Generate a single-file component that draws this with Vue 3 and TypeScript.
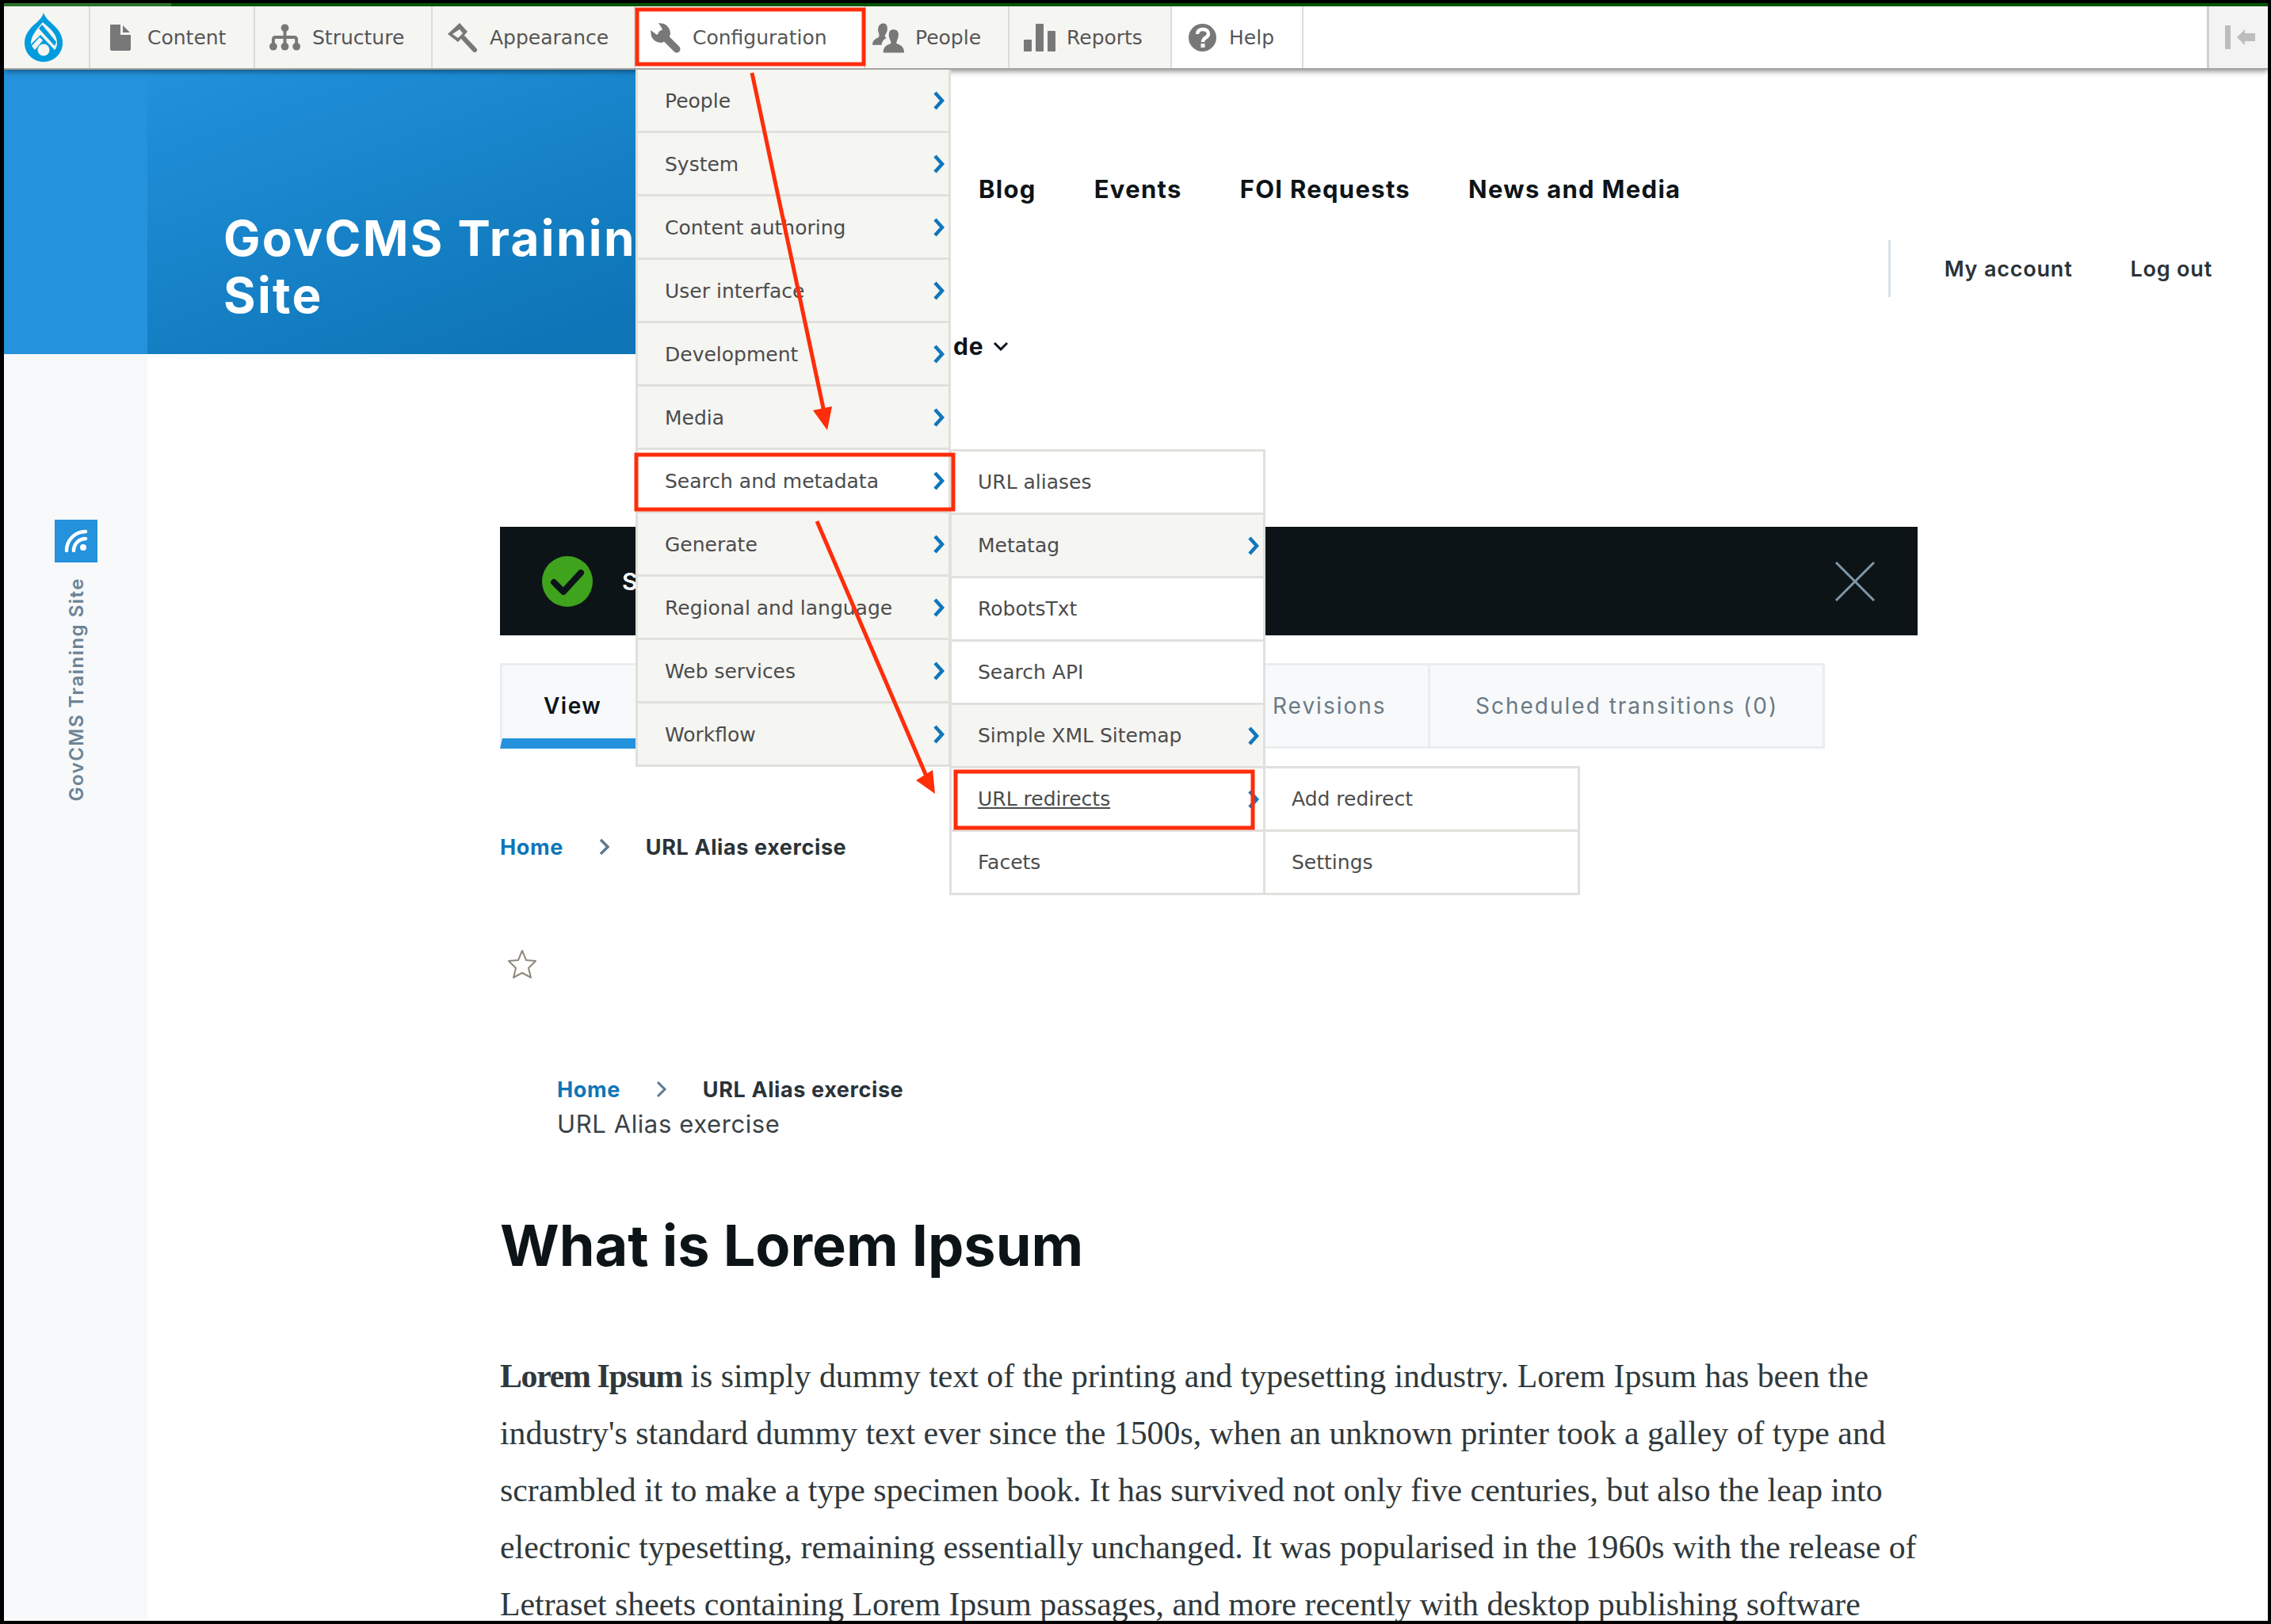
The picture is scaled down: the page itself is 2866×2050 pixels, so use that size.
<script setup lang="ts">
interface TopItem { label: string; icon: string; w: number; cls?: string }
interface MenuRow { label: string; arrow?: boolean; white?: boolean; under?: boolean }

const topItems: TopItem[] = [
  { label: 'Content', icon: 'content', w: 208 },
  { label: 'Structure', icon: 'structure', w: 224 },
  { label: 'Appearance', icon: 'appearance', w: 256 },
  { label: 'Configuration', icon: 'config', w: 290, cls: 'active' },
  { label: 'People', icon: 'people', w: 182, cls: 'tight' },
  { label: 'Reports', icon: 'reports', w: 205 },
  { label: 'Help', icon: 'help', w: 166, cls: 'active' },
]

const level1: MenuRow[] = [
  { label: 'People', arrow: true },
  { label: 'System', arrow: true },
  { label: 'Content authoring', arrow: true },
  { label: 'User interface', arrow: true },
  { label: 'Development', arrow: true },
  { label: 'Media', arrow: true },
  { label: 'Search and metadata', arrow: true, white: true },
  { label: 'Generate', arrow: true },
  { label: 'Regional and language', arrow: true },
  { label: 'Web services', arrow: true },
  { label: 'Workflow', arrow: true },
]
const level2: MenuRow[] = [
  { label: 'URL aliases', white: true },
  { label: 'Metatag', arrow: true },
  { label: 'RobotsTxt', white: true },
  { label: 'Search API', white: true },
  { label: 'Simple XML Sitemap', arrow: true },
  { label: 'URL redirects', arrow: true, white: true, under: true },
  { label: 'Facets', white: true },
]
const level3: MenuRow[] = [
  { label: 'Add redirect', white: true },
  { label: 'Settings', white: true },
]
const menus = [
  { cls: 'm1', rows: level1 },
  { cls: 'm2', rows: level2 },
  { cls: 'm3', rows: level3 },
]

const bodyLines = [
  ' is simply dummy text of the printing and typesetting industry. Lorem Ipsum has been the',
  "industry's standard dummy text ever since the 1500s, when an unknown printer took a galley of type and",
  'scrambled it to make a type specimen book. It has survived not only five centuries, but also the leap into',
  'electronic typesetting, remaining essentially unchanged. It was popularised in the 1960s with the release of',
  'Letraset sheets containing Lorem Ipsum passages, and more recently with desktop publishing software',
]
</script>

<template>
  <div class="frame">
    <div class="screen">
      <div class="progress"><div class="progress-done"></div></div>

      <div class="toolbar">
        <div class="logo-cell">
          <svg width="48" height="62" viewBox="0 0 48 62">
            <path fill="#009cde" d="M24 0C26 7 32 11 38 17C44 23 48 29 48 38C48 52 37 62 24 62C11 62 0 52 0 38C0 29 5 22 11 16C17 11 22 7 24 0Z" />
            <path fill="#f5f5f2" d="M23 12C29 18 41 25 41 38C41 42 40 45 38 47L20 28L8 40C7 30 17 19 23 12Z" />
            <path fill="#009cde" d="M22 15L40 37L38 42L18 20Z" />
            <path fill="#f5f5f2" d="M9 42L19 31L23 35L13 47Z" />
            <circle cx="24" cy="47" r="7.5" fill="#f5f5f2" />
          </svg>
        </div>
        <div
          v-for="item in topItems"
          :key="item.label"
          class="top-item"
          :class="item.cls"
          :style="{ width: item.w + 'px' }"
        >
          <span class="top-icon">
            <svg v-if="item.icon === 'content'" width="26" height="33" viewBox="0 0 26 33"><path fill="#787878" d="M1 0H13V13H26V31Q26 33 24 33H2Q0 33 0 31V1Q0 0 1 0ZM16 1L25 10H16Z" /></svg>
            <svg v-else-if="item.icon === 'structure'" width="41" height="36" viewBox="0 0 41 36">
              <g fill="#787878"><circle cx="20" cy="5" r="5" /><circle cx="5" cy="29" r="5" /><circle cx="20" cy="29" r="5" /><circle cx="35" cy="29" r="5" /></g>
              <path fill="none" stroke="#787878" stroke-width="4" d="M20 8V28M5 28V20Q5 17 8 17H32Q35 17 35 20V28" />
            </svg>
            <svg v-else-if="item.icon === 'appearance'" width="38" height="38" viewBox="0 0 38 38">
              <path fill="#787878" d="M15 0L25 11L13 24L0 14Z" />
              <path fill="#f5f5f2" d="M6 14L15 8L19 13L13 19Z" />
              <path fill="none" stroke="#787878" stroke-width="6" stroke-linecap="round" d="M20 19L34 34" />
            </svg>
            <svg v-else-if="item.icon === 'config'" width="38" height="38" viewBox="0 0 38 38">
              <path fill="#787878" d="M10 0L17 1Q25 5 25 14Q23 22 14 25Q5 25 1 17L0 9L8 15L15 8Z" />
              <path fill="none" stroke="#787878" stroke-width="9" stroke-linecap="round" d="M14 14L33 33" />
            </svg>
            <svg v-else-if="item.icon === 'people'" width="41" height="38" viewBox="0 0 41 38">
              <path fill="#787878" d="M14 0C19 0 20 5 19 10C18 13 16 15 16 17L18 19C14 21 12 24 12 28H0C0 22 4 20 8 18C9 16 9 14 8 12C6 7 8 0 14 0Z" />
              <path fill="#787878" d="M27 8C33 8 35 13 33 19C32 22 31 24 31 26C35 28 41 29 41 38H14C14 29 20 28 24 26C24 24 23 22 22 19C20 13 22 8 27 8Z" />
            </svg>
            <svg v-else-if="item.icon === 'reports'" width="40" height="35" viewBox="0 0 40 35"><g fill="#787878"><rect x="0" y="20" width="10" height="15" rx="1" /><rect x="15" y="0" width="10" height="35" rx="1" /><rect x="30" y="9" width="10" height="26" rx="1" /></g></svg>
            <svg v-else width="35" height="35" viewBox="0 0 35 35">
              <circle cx="17.5" cy="17.5" r="17.5" fill="#787878" />
              <path fill="none" stroke="#fff" stroke-width="4.5" d="M11 13C11 9 14 7 18 7C22 7 25 9 25 13C25 18 18 17 18 23" />
              <rect x="15.5" y="25" width="5" height="5" fill="#fff" />
            </svg>
          </span>
          <span>{{ item.label }}</span>
        </div>
        <div class="toolbar-fill"></div>
        <div class="toggle-cell">
          <svg width="38" height="30" viewBox="0 0 38 30" fill="#bdbdbd"><rect x="0" y="0" width="7" height="30" /><path d="M15 15L25 5V10H38V20H25V25Z" /></svg>
        </div>
      </div>

      <div class="page">
        <aside class="sidebar">
          <div class="sidebar-top"></div>
          <div class="rss">
            <svg width="30" height="30" viewBox="0 0 30 30" fill="none" stroke="#fff" stroke-width="4.5" stroke-linecap="round">
              <path d="M3 27A24 24 0 0 1 27 3" />
              <path d="M12 27A15 15 0 0 1 27 12" />
              <circle cx="24" cy="23" r="4" fill="#fff" stroke="none" />
            </svg>
          </div>
          <div class="side-title">GovCMS Training Site</div>
        </aside>

        <main class="main">
          <header class="site-head">
            <div class="brand"><h2 class="site-name">GovCMS Training<br>Site</h2></div>
            <div class="head-right">
              <nav class="primary-nav">
                <a>Blog</a><a>Events</a><a>FOI Requests</a><a>News and Media</a>
              </nav>
              <div class="account">
                <span class="account-sep"></span>
                <a class="first">My account</a><a>Log out</a>
              </div>
              <div class="more-nav">
                <span>de</span>
                <svg width="20" height="12" viewBox="0 0 20 12" fill="none" stroke="#0d1417" stroke-width="3"><path d="M2 2L10 10L18 2" /></svg>
              </div>
            </div>
          </header>

          <section class="content">
            <div class="message">
              <svg class="msg-check" width="64" height="64" viewBox="0 0 64 64">
                <circle cx="32" cy="32" r="32" fill="#3fa31e" />
                <path fill="none" stroke="#0d1417" stroke-width="8" stroke-linecap="round" stroke-linejoin="round" d="M15 33L27 45L49 21" />
              </svg>
              <span class="msg-text">S</span>
              <svg class="msg-close" width="50" height="50" viewBox="0 0 50 50" stroke="#7f97a8" stroke-width="3"><path d="M1 1L49 49M49 1L1 49" /></svg>
            </div>

            <div class="tabs">
              <div class="tab tab-view">View</div>
              <div class="tab tab-filler"></div>
              <div class="tab tab-rev">Revisions</div>
              <div class="tab tab-sched">Scheduled transitions (0)</div>
            </div>

            <div class="crumbs crumbs-top">
              <a>Home</a>
              <svg width="14" height="22" viewBox="0 0 14 22" fill="none" stroke="#5f7a8f" stroke-width="3.5"><path d="M2 2L11 11L2 20" /></svg>
              <b>URL Alias exercise</b>
            </div>

            <svg class="star" width="38" height="38" viewBox="0 0 38 38" fill="none" stroke="#8f897a" stroke-width="2" stroke-linejoin="round">
              <path d="M19 2L24 14L36 15L27 24L30 36L19 30L8 36L11 24L2 15L14 14Z" />
            </svg>

            <div class="article-head">
              <div class="crumbs">
                <a>Home</a>
                <svg width="14" height="22" viewBox="0 0 14 22" fill="none" stroke="#5f7a8f" stroke-width="3"><path d="M2 2L11 11L2 20" /></svg>
                <b>URL Alias exercise</b>
              </div>
              <div class="page-title">URL Alias exercise</div>
            </div>

            <h1 class="headline">What is Lorem Ipsum</h1>

            <div class="body-text">
              <p v-for="(line, i) in bodyLines" :key="i"><strong v-if="i === 0">Lorem Ipsum</strong>{{ line }}</p>
            </div>
          </section>
        </main>
      </div>
    </div>

    <!-- dropdown menus opened over the page -->
    <ul v-for="menu in menus" :key="menu.cls" class="menu" :class="menu.cls">
      <li v-for="row in menu.rows" :key="row.label" :class="{ white: row.white }">
        <span :class="{ under: row.under }">{{ row.label }}</span>
        <svg v-if="row.arrow" class="chev" width="16" height="24" viewBox="0 0 16 24" fill="none" stroke="#0f76bd" stroke-width="4.5"><path d="M3 2L12 12L3 22" /></svg>
      </li>
    </ul>

    <!-- red annotations drawn on the screenshot -->
    <svg class="marks" width="2866" height="2050" viewBox="0 0 2866 2050" fill="none" stroke="#ff2d0a">
      <rect x="804" y="12" width="286" height="69" stroke-width="5" />
      <rect x="803" y="574" width="400" height="69" stroke-width="5" />
      <rect x="1206" y="974" width="375" height="71" stroke-width="5" />
      <path d="M949 92L1040 520M1031 658L1170 982" stroke-width="5" />
      <path d="M1044 543L1050 513L1026 518Z M1180 1002L1177 972L1156 985Z" fill="#ff2d0a" stroke="none" />
    </svg>
  </div>
</template>

<style scoped>
.frame {
  position: relative;
  box-sizing: border-box;
  width: 2866px;
  height: 2050px;
  padding: 4px 4px 4px 5px;
  background: #000;
  overflow: hidden;
}
.screen {
  position: relative;
  display: flex;
  flex-direction: column;
  height: 100%;
  background: #fff;
  overflow: hidden;
  font-family: Inter, "Liberation Sans", sans-serif;
}
.progress {
  flex: none;
  height: 4px;
  background: #005c00;
}
.progress-done {
  width: 211px;
  height: 4px;
  background: #2e7a2e;
}

/* toolbar */
.toolbar {
  position: relative;
  z-index: 2;
  flex: none;
  display: flex;
  box-sizing: border-box;
  height: 80px;
  background: #fff;
  border-bottom: 2px solid #a3a3a0;
  box-shadow: 0 2px 7px rgba(0, 0, 0, 0.45);
  font-family: "DejaVu Sans", sans-serif;
  font-size: 25px;
  color: #565656;
}
.logo-cell {
  flex: none;
  box-sizing: border-box;
  width: 109px;
  display: flex;
  align-items: center;
  justify-content: center;
  padding-right: 8px;
  background: #f5f5f2;
  border-right: 2px solid #dcdcd8;
}
.top-item {
  flex: none;
  box-sizing: border-box;
  display: flex;
  align-items: center;
  padding-left: 18px;
  padding-top: 1px;
  background: #f5f5f2;
  border-right: 2px solid #dcdcd8;
}
.top-item.active {
  background: #fff;
}
.top-item.tight {
  padding-left: 9px;
}
.top-icon {
  flex: none;
  width: 40px;
  margin-right: 14px;
  display: flex;
  justify-content: center;
}
.toolbar-fill {
  flex: 1;
}
.toggle-cell {
  flex: none;
  box-sizing: border-box;
  width: 77px;
  display: flex;
  align-items: center;
  padding-left: 20px;
  background: #f3f3f3;
  border-left: 3px solid #cfcfcf;
}

/* page */
.page {
  flex: 1;
  display: flex;
  min-height: 0;
}
.sidebar {
  flex: none;
  width: 181px;
  display: flex;
  flex-direction: column;
  align-items: center;
  background: #f7f9fb;
}
.sidebar-top {
  align-self: stretch;
  height: 359px;
  background: #2492dc;
}
.rss {
  width: 54px;
  height: 54px;
  margin-top: 209px;
  display: flex;
  align-items: center;
  justify-content: center;
  background: #2492dc;
}
.side-title {
  margin: 19px 0 0 2px;
  writing-mode: vertical-rl;
  transform: rotate(180deg);
  font-size: 24px;
  font-weight: 600;
  letter-spacing: 1.5px;
  line-height: 30px;
  color: #6d8394;
}
.main {
  flex: 1;
  min-width: 0;
}
.site-head {
  display: flex;
  height: 359px;
}
.brand {
  flex: none;
  box-sizing: border-box;
  width: 1014px;
  padding: 177px 0 0 96px;
  background: linear-gradient(160deg, #2292dc 0%, #0d74b6 75%);
}
.site-name {
  margin: 0;
  font-size: 62px;
  line-height: 72px;
  font-weight: 700;
  letter-spacing: 2.3px;
  color: #fff;
  white-space: nowrap;
}
.head-right {
  flex: 1;
  display: flex;
  flex-direction: column;
  min-width: 0;
  padding-right: 70px;
}
.primary-nav {
  display: flex;
  gap: 73px;
  margin-top: 131px;
  padding-left: 35px;
  font-size: 31px;
  line-height: 40px;
  font-weight: 700;
  letter-spacing: 1.3px;
  color: #0d1417;
}
.account {
  display: flex;
  align-items: center;
  justify-content: flex-end;
  gap: 73px;
  height: 72px;
  margin-top: 44px;
  font-size: 27px;
  font-weight: 600;
  letter-spacing: 0.8px;
  color: #2a3338;
}
.account-sep {
  width: 3px;
  height: 72px;
  margin-right: -5px;
  background: #dbe2e8;
}
.more-nav {
  display: flex;
  align-items: center;
  gap: 12px;
  height: 40px;
  margin-top: 44px;
  padding-left: 3px;
  font-size: 30px;
  font-weight: 700;
  letter-spacing: 0.8px;
  color: #0d1417;
}

/* content */
.content {
  padding: 218px 442px 0 445px;
}
.message {
  display: flex;
  align-items: center;
  height: 137px;
  padding: 0 54px 0 53px;
  background: #0d1417;
  color: #fff;
  font-size: 30px;
  font-weight: 600;
}
.msg-check {
  flex: none;
}
.msg-text {
  flex: 1;
  margin-left: 37px;
}
.msg-close {
  flex: none;
}
.tabs {
  display: flex;
  width: 1672px;
  height: 108px;
  margin-top: 35px;
  font-size: 28px;
}
.tab {
  box-sizing: border-box;
  display: flex;
  align-items: center;
  background: #f7f9fb;
  border: 3px solid #e9edf1;
  border-left-width: 0;
  letter-spacing: 2px;
  color: #6b7a85;
}
.tab-view {
  width: 190px;
  padding: 10px 0 0 52px;
  border-left-width: 3px;
  border-bottom: 13px solid #2492dc;
  font-weight: 600;
  letter-spacing: 1.5px;
  color: #0d1417;
}
.tab-filler {
  flex: 1;
}
.tab-rev {
  width: 254px;
  padding-left: 55px;
}
.tab-sched {
  width: 498px;
  padding-left: 57px;
}
.crumbs {
  display: flex;
  align-items: center;
  gap: 45px;
  height: 40px;
  font-size: 27px;
  font-weight: 700;
  letter-spacing: 0.6px;
  color: #2a3338;
}
.crumbs a {
  color: #0e75b8;
}
.crumbs b {
  font-weight: 700;
}
.crumbs-top {
  margin-top: 104px;
}
.star {
  display: block;
  margin: 109px 0 0 9px;
}
.article-head {
  margin-top: 119px;
  padding-left: 72px;
}
.page-title {
  margin-top: 2px;
  font-size: 31px;
  line-height: 44px;
  letter-spacing: 0.6px;
  color: #3a4347;
}
.headline {
  margin: 89px 0 0;
  font-size: 72px;
  line-height: 84px;
  font-weight: 700;
  color: #0d1417;
}
.body-text {
  margin-top: 87px;
  font-family: "Liberation Serif", serif;
  font-size: 41.8px;
  line-height: 72px;
  color: #30383b;
}
.body-text p {
  margin: 0;
  white-space: nowrap;
}
.body-text strong {
  letter-spacing: -1.3px;
}

/* menus */
.menu {
  position: absolute;
  z-index: 3;
  margin: 0;
  padding: 0;
  box-sizing: border-box;
  width: 398px;
  list-style: none;
  font-family: "DejaVu Sans", sans-serif;
  font-size: 25px;
  color: #4c4c4c;
  background: #f5f5f2;
  border-right: 3px solid #e0e0dc;
  border-left: 3px solid #e0e0dc;
}
.menu li {
  position: relative;
  box-sizing: border-box;
  display: flex;
  align-items: center;
  height: 80px;
  padding-left: 33px;
  background: #f5f5f2;
  border-bottom: 3px solid #e0e0dc;
}
.menu li.white {
  background: #fff;
}
.under {
  text-decoration: underline;
}
.chev {
  position: absolute;
  right: 4px;
  top: 27px;
}
.m1 {
  left: 802px;
  top: 88px;
}
.m1 li {
  padding: 2px 0 0 34px;
}
.m2 {
  left: 1198px;
  top: 567px;
  width: 399px;
  border-top: 3px solid #e0e0dc;
}
.m3 {
  left: 1594px;
  top: 967px;
  width: 400px;
  border-top: 3px solid #e0e0dc;
}
.marks {
  position: absolute;
  z-index: 4;
  left: 0;
  top: 0;
}
</style>

<style>
body {
  margin: 0;
}
</style>
